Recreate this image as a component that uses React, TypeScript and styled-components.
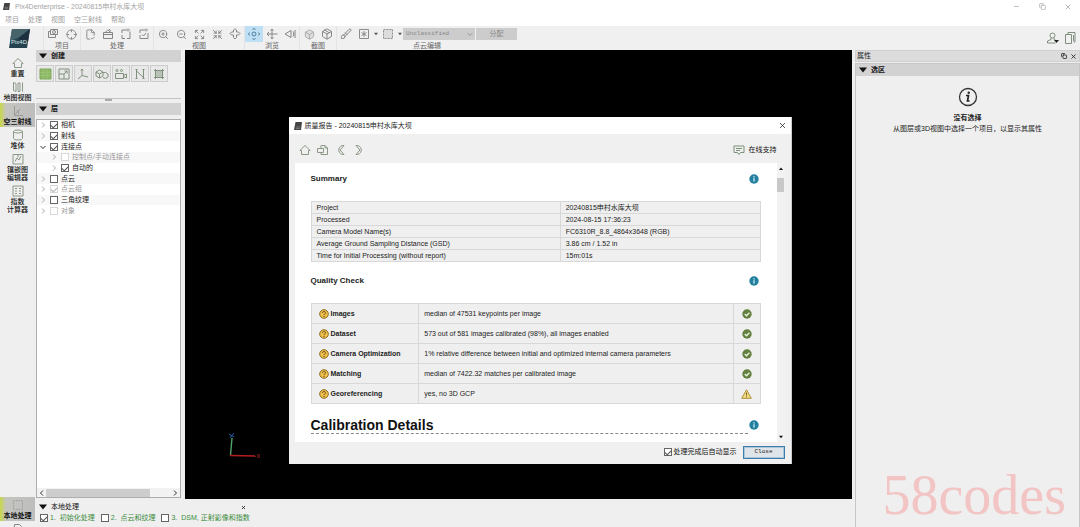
import React from "react";
import styled, { createGlobalStyle, css } from "styled-components";
import {
  ZoomIn, ZoomOut, Crosshair, FileCheck2, Minus, Copy, X,
  Box, Package, Brush, Cylinder, SquareDashed, Expand, Shrink,
} from "lucide-react";

const sans = `"Liberation Sans", "Noto Sans CJK SC", sans-serif`;
const mono = `"Liberation Mono", "Noto Sans CJK SC", monospace`;

const GlobalStyle = createGlobalStyle`
  * { box-sizing: border-box; }
  html, body, #root { height: 100%; }
  body { margin: 0; font: 7px/10px ${sans}; color: #222; background: #efefef; overflow: hidden; }
  button, input, select { font: inherit; color: inherit; margin: 0; padding: 0; border: 0; background: none; border-radius: 0; }
  h1, h2, h3, p, ul { margin: 0; padding: 0; }
  svg { display: block; flex: none; }
`;

const Shell = styled.div`
  height: 100vh;
  display: flex;
  flex-direction: column;
`;

/* Window chrome */
const TitleBar = styled.header`
  display: flex;
  align-items: center;
  gap: 5px;
  height: 13px;
  padding: 0 8px 0 3px;
  background: #fff;
  color: #a4a4a4;
`;
const WindowButtons = styled.div`
  display: flex;
  gap: 18px;
  margin-left: auto;
  button { display: grid; place-items: center; width: 8px; height: 10px; color: #999; }
`;
const MenuBar = styled.nav`
  display: flex;
  gap: 9px;
  height: 13px;
  padding: 1px 5px 0;
  background: #fff;
  color: #a0a0a0;
`;

/* Toolbar */
const Toolbar = styled.div`
  display: flex;
  height: 24px;
  flex: none;
  background: #f0f0f0;
  color: #666;
`;
const Brand = styled.div`
  width: 43px;
  padding: 3px 0 0 9px;
`;
const ToolGroup = styled.div`
  display: flex;
  flex-direction: column;
  align-items: center;
  border-left: 1px solid #e4e4e4;
`;
const ToolRow = styled.div`
  display: flex;
  align-items: center;
  height: 16px;
`;
const ToolButton = styled.button<{ $on?: boolean; $narrow?: boolean }>`
  display: grid;
  place-items: center;
  width: ${(p) => (p.$narrow ? 6 : 18)}px;
  height: 16px;
  color: #858585;
  ${(p) => p.$on && css`background: #bfdff4; color: #4d7f9d;`}
`;
const ToolLabel = styled.span`
  line-height: 8px;
`;
const SelectBox = styled.div`
  display: flex;
  align-items: center;
  width: 72px;
  height: 12px;
  padding-right: 2px;
  background: #ccc;
`;
const ClassSelect = styled.select`
  appearance: none;
  flex: 1;
  height: 12px;
  padding: 0 3px;
  color: #888;
  font: 6px/12px ${mono};
`;
const AssignButton = styled.button`
  width: 41px;
  height: 12px;
  margin-left: 1px;
  background: #ccc;
  color: #888;
`;
const Account = styled.div`
  display: flex;
  gap: 5px;
  align-items: center;
  margin-left: auto;
  padding-right: 4px;
`;

/* Work area */
const Workspace = styled.div`
  display: flex;
  flex: 1;
  min-height: 0;
`;
const SideNav = styled.nav`
  display: flex;
  flex-direction: column;
  flex: none;
  width: 35px;
  padding-top: 5px;
  overflow: hidden;
`;
const NavButton = styled.button<{ $on?: boolean; $tall?: boolean }>`
  display: flex;
  flex-direction: column;
  align-items: center;
  justify-content: center;
  gap: 1px;
  flex: none;
  height: ${(p) => (p.$tall ? 32 : 24)}px;
  font-weight: 500;
  line-height: 8px;
  white-space: pre-line;
  text-align: center;
  color: #111;
  svg { color: #8b9886; }
  ${(p) => p.$on && css`
    background: linear-gradient(90deg, #c8d848 0, #c4c4c0 6px, #bdbdbd 100%);
    font-weight: 700;
    svg { color: #999; }
  `}
`;
const NavFill = styled.div`
  flex: 1;
`;
const Middle = styled.div`
  display: flex;
  flex: 1;
  flex-direction: column;
  min-width: 0;
`;
const MiddleTop = styled.div`
  display: flex;
  flex: 1;
  min-height: 0;
`;
const LeftPanel = styled.section`
  display: flex;
  flex-direction: column;
  flex: none;
  width: 150px;
  padding: 0 4px 1px 1px;
`;
const SectionHead = styled.button<{ $plain?: boolean }>`
  display: flex;
  align-items: center;
  gap: 4px;
  flex: none;
  width: 100%;
  height: 12px;
  padding-left: 3px;
  font-weight: ${(p) => (p.$plain ? 400 : 700)};
  color: #111;
  background: ${(p) => (p.$plain ? "transparent" : "#d2d2d2")};
`;
const CreateRow = styled.div`
  display: flex;
  gap: 1px;
  padding-top: 3px;
  height: 36px;
`;
const CreateButton = styled.button`
  display: grid;
  place-items: center;
  width: 18px;
  height: 17px;
  border: 1px solid #ccc;
  background: #e8e8e8;
  color: #80907c;
`;
const Splitter = styled.div`
  display: flex;
  justify-content: center;
  height: 5px;
  border-top: 1px solid #c4c4c4;
  &::before { content: ""; width: 7px; height: 2px; background: #aaa; }
`;
const TreeBox = styled.div`
  display: flex;
  flex-direction: column;
  flex: 1;
  margin-top: 4px;
  border: 1px solid #adadad;
  background: #fff;
`;
const TreeList = styled.ul`
  display: grid;
  grid-auto-rows: 1fr;
  height: 96px;
  list-style: none;
`;
const TreeRow = styled.li<{ $level: number; $off?: boolean }>`
  display: flex;
  align-items: center;
  gap: 4px;
  padding-left: ${(p) => 3 + p.$level * 11}px;
  color: ${(p) => (p.$off ? "#999" : "#222")};
  &:nth-child(even) { background: #f8f8f8; }
  label { display: flex; align-items: center; gap: 3px; }
`;
const CheckInput = styled.input<{ $faint?: boolean }>`
  appearance: none;
  display: grid;
  place-items: center;
  flex: none;
  width: 8px;
  height: 8px;
  border: 1px solid ${(p) => (p.$faint ? "#d8d8d8" : "#666")};
  background: #fff;
  &:checked::before {
    content: "";
    width: 5px;
    height: 3px;
    border: solid ${(p) => (p.$faint ? "#b4b4b4" : "#555")};
    border-width: 0 0 1px 1px;
    transform: rotate(-45deg);
  }
`;
const HScroll = styled.div`
  display: flex;
  align-items: center;
  height: 9px;
  margin-top: auto;
  padding: 0 2px;
  background: #f2f2f2;
  &::before { order: 1; content: ""; width: 104px; height: 8px; margin: 0 auto 0 1px; background: #cdcdcd; }
  svg:last-child { order: 2; }
`;
const Viewport = styled.main`
  display: flex;
  flex: 1;
  align-items: flex-end;
  padding: 0 0 38px 41px;
  background: #000;
`;
const Process = styled.section`
  flex: none;
  width: 210px;
  height: 28px;
  padding: 2px 0 0 1px;
`;
const ProcessHead = styled.div`
  display: flex;
  align-items: center;
  height: 12px;
  padding-right: 4px;
`;
const ProcessSteps = styled.div`
  display: flex;
  gap: 6px;
  height: 10px;
  padding-left: 4px;
  color: #3c8c3c;
  label { display: flex; align-items: center; gap: 2px; white-space: pre; }
`;
const Properties = styled.aside`
  display: flex;
  flex-direction: column;
  flex: none;
  width: 228px;
  padding-left: 3px;
`;
const PropHead = styled.div`
  display: flex;
  align-items: center;
  gap: 3px;
  height: 12px;
  padding: 0 2px 0 1px;
  background: #dcdcdc;
  border: 1px solid #d0d0d0;
  span { margin-right: auto; }
`;
const PropBody = styled.div`
  display: flex;
  flex: 1;
  flex-direction: column;
  margin-top: 1px;
  border: 1px solid #c6c6c6;
  border-bottom: 0;
`;
const Empty = styled.div`
  display: flex;
  flex-direction: column;
  align-items: center;
  padding-top: 11px;
  strong { margin-top: 5px; line-height: 11px; }
  p { line-height: 11px; }
`;
const Watermark = styled.p`
  margin-top: auto;
  padding: 0 13px 2px;
  text-align: right;
  font: 56px/60px "Liberation Serif", serif;
  color: #f2c4c4;
`;

/* Report window, floating over the workspace */
const Overlay = styled.div`
  position: absolute;
  inset: 0;
  display: flex;
  justify-content: center;
  align-items: flex-start;
  padding-top: 117px;
`;
const Dialog = styled.section`
  width: 503px;
  background: #f0f0f0;
  border-right: 1px solid #ccc;
`;
const DialogTitle = styled.header`
  display: flex;
  align-items: center;
  justify-content: space-between;
  height: 17px;
  padding: 0 4px 0 5px;
  background: #fff;
  span { display: flex; align-items: center; gap: 3px; }
`;
const DialogTools = styled.div`
  display: flex;
  align-items: center;
  gap: 6px;
  height: 29px;
  padding: 2px 14px 0 10px;
  button { color: #8b9886; }
  a { display: flex; align-items: center; gap: 4px; margin-left: auto; color: #111; text-decoration: none; }
`;
const ReportFrame = styled.div`
  display: flex;
  height: 279px;
  margin: 0 6px;
  background: #fff;
`;
const Report = styled.div`
  flex: 1;
  padding: 10px 16px 0;
`;
const ReportHead = styled.div`
  display: flex;
  align-items: center;
  justify-content: space-between;
  height: 12px;
  margin-bottom: 16px;
  padding-right: 2px;
  h2 { font-size: 8px; line-height: 12px; }
`;
const DetailsHead = styled.div`
  display: flex;
  align-items: center;
  gap: 1px;
  height: 18px;
  margin-top: 12px;
  padding-right: 2px;
  h1 { flex: 1; height: 18px; border-bottom: 1px dashed #888; font-size: 14px; line-height: 18px; color: #111; }
`;
const DataTable = styled.table<{ $row: number }>`
  width: 100%;
  table-layout: fixed;
  border-collapse: collapse;
  background: #efefef;
  th, td {
    height: ${(p) => p.$row}px;
    padding: 0 5px;
    border: 1px solid #d8d8d8;
    text-align: left;
    font-weight: 400;
    line-height: 8px;
  }
`;
const SummaryTable = styled(DataTable)`
  margin-bottom: 13px;
`;
const QualityTable = styled(DataTable)`
  th { font-weight: 700; padding-left: 7px; }
  th > span { display: flex; align-items: center; gap: 2px; }
  td:last-child svg { margin: 0 auto; }
  td:last-child { padding: 0; }
`;
const VScroll = styled.div`
  display: flex;
  flex-direction: column;
  align-items: center;
  width: 8px;
  padding: 4px 0 3px;
  background: #f2f2f2;
  &::before { order: 1; content: ""; width: 7px; height: 14px; margin: 7px 0 auto; background: #c8c8c8; }
  svg:last-child { order: 2; }
`;
const DialogFoot = styled.footer`
  display: flex;
  align-items: center;
  justify-content: flex-end;
  gap: 6px;
  height: 22px;
  padding: 0 6px 2px 0;
  label { display: flex; align-items: center; gap: 2px; color: #111; }
`;
const CloseButton = styled.button`
  width: 42px;
  height: 13px;
  border: 1px solid #3d7cab;
  outline: 1px solid #a9c6da;
  outline-offset: -2px;
  background: #dfe4e8;
  font: 6px/8px ${mono};
`;

/* Small drawings */
const Line = ({ d, w = 12, color }: { d: string; w?: number; color?: string }) => (
  <svg width={w} height="12" viewBox={`0 0 ${w} 12`} fill="none" stroke={color ?? "currentColor"}><path d={d} /></svg>
);
const Caret = ({ up, size = 8, color = "#111" }: { up?: boolean; size?: number; color?: string }) => (
  <svg width={size} height={size} viewBox="0 0 8 8"><path d={up ? "M0 6 4 1l4 5z" : "M0 1.500h8L4 6.500z"} fill={color} /></svg>
);
const Chevron = ({ dir, color = "#999" }: { dir: "left" | "right" | "down"; color?: string }) => (
  <svg width="6" height="6" viewBox="0 0 6 6" fill="none" stroke={color}>
    <path d={{ left: "M4 .5 1.500 3 4 5.500", right: "M2 .5 4.500 3 2 5.500", down: "M.5 2 3 4.500 5.500 2" }[dir]} />
  </svg>
);
const Doc = ({ size = 8 }: { size?: number }) => (
  <svg width={size} height={size} viewBox="0 0 8 8"><path d="M1.500 0H8L7 8H0z" fill="#444" /><path d="M2 5h4M2 6.500h4" stroke="#999" strokeWidth=".6" /></svg>
);
const Logo = () => (
  <svg width="21" height="19" viewBox="0 0 21 19" role="img" aria-label="Pix4D">
    <path d="M3 0h18l-3 19H0z" fill="#26424f" />
    <path d="M3 0h18L9 9 1 12z" fill="#48646b" />
    <path d="M21 0 9 10l10 3z" fill="#1c3040" />
    <text x="2" y="15" fontSize="6" fontFamily="Liberation Sans" fill="#dce6e8">Pix4D</text>
  </svg>
);
const Info = () => (
  <svg width="10" height="10" viewBox="0 0 10 10"><circle cx="5" cy="5" r="4.700" fill="#23809f" /><path d="M5 4.200v3.300M5 2.300v1.100" stroke="#d5f0f8" strokeWidth="1.300" /></svg>
);
const Help = () => (
  <svg width="10" height="10" viewBox="0 0 10 10" fill="none"><circle cx="5" cy="5" r="4.300" fill="#f0c04a" stroke="#8a6d24" /><path d="M3.500 4c0-2 3-2 3-.2C6.500 5 5 4.800 5 6.200M5 7v1" stroke="#5c4716" /></svg>
);
const Good = () => (
  <svg width="10" height="10" viewBox="0 0 10 10" fill="none"><circle cx="5" cy="5" r="4.700" fill="#64803f" /><path d="M2.800 5 4.500 6.700 7.400 3.700" stroke="#e9f2df" strokeWidth="1.400" /></svg>
);
const Warn = () => (
  <svg width="11" height="10" viewBox="0 0 11 10" fill="none"><path d="M5.500.8 10.300 9.300H.7z" fill="#f0da84" stroke="#b08f35" /><path d="M5.500 3.500v3M5.500 7.300v1" stroke="#7d671f" /></svg>
);
const Axes = () => (
  <svg width="36" height="30" viewBox="0 0 36 30" fill="none">
    <path d="M4.500 24 6 7" stroke="#4fa56c" strokeWidth="1.400" />
    <path d="M4 24.500 30 25" stroke="#b21e1e" strokeWidth="1.400" />
    <path d="M3 3l5 3M8 2 4 7" stroke="#1f5da8" />
    <path d="M31 23l3 4M34 23l-3 4" stroke="#901818" />
  </svg>
);
const BigInfo = () => (
  <svg width="20" height="20" viewBox="0 0 20 20" fill="none"><circle cx="10" cy="10" r="8.500" stroke="#333" strokeWidth="1.300" /><path d="M8 8.500h2.500L9.500 14h2" stroke="#222" strokeWidth="1.700" /><circle cx="10.700" cy="5.700" r="1.200" fill="#222" /></svg>
);
const Person = () => (
  <svg width="13" height="12" viewBox="0 0 13 12" fill="none" stroke="#7f8f7d"><circle cx="5.500" cy="3.500" r="2.500" /><path d="M4 6v1.500L.5 9v2h8M7 6v1.500l2 1" /><path d="M7 8h5l-2.500 3z" fill="#222" stroke="none" /></svg>
);
const Panels = () => <Line w={11} color="#7f8f7d" d="M.5 2.500h6v9h-6zM3 2V.5h7v9.500H8.500M8.500 3v6" />;
const HomeMark = () => <Line d="M.8 6.500 6 1.500l5.200 5H9.500v4h-7v-4z" />;
const MapMark = () => <Line d="M1.500 1.500 4 2.500v8l-2.500-1zM6 2v8.500h2V2zM10.500 1.500v9" />;
const RayMark = () => <Line d="M2.500 1v9.500H11M2.500 10 8.500 4M5 5l2 4" />;
const MosaicMark = () => <Line d="M1 1.500h10v9.500H1zM3 8.500 5 5l2 2 2-4M6 1.500v3" />;
const CalcMark = () => <Line d="M1 1h10v10H1zM3 3.500h2M7 3.500h2M3 6h2M7 6h2M3 8.500h2M7 8.500h2" />;
const LayersMark = () => <Line d="M3.500 1.500h7v5h-7zM3.500 3.500h-2v6h7v-3M5.500 4a1.500 1.500 0 1 0 3 0 1.500 1.500 0 1 0-3 0" />;
const CaseMark = () => <Line d="M1.500 4.500h9v6h-9zM1.500 6.500h9M4 4.500c0-3 4-3 4 0M7 1l1.500 1.500L7 4" />;
const CropMark = () => <Line d="M2 5V2h6M10 3.500v7H7M5 10.500H2V7M8 .5 9.500 2 8 3.500" />;
const CropCheck = () => <Line d="M2 5V2h6M10 5v5.500H2V7M8 .5 9.500 2 8 3.500M4 6.500l1.500 1.500L8 5" />;
const StarBox = () => <Line color="#8c8c8c" d="M1.500 1.500h9v9h-9zM6 3v6M3.500 4.500l5 3M8.500 4.500l-5 3" />;
const SquareFill = () => (
  <svg width="12" height="12" viewBox="0 0 12 12"><path d="M1.500 1.500h9v9h-9z" fill="#dcdcdc" stroke="#8c8c8c" strokeDasharray="2 1" /></svg>
);
const Orbit = () => <Line d="M4 6a2 2 0 1 0 4 0 2 2 0 1 0-4 0M4.500 1.500 6 .5l1.500 1M4.500 10.500l1.500 1 1.500-1M1.500 4.500.5 6l1 1.500M10.500 4.500l1 1.500-1 1.500" />;
const Fly = () => <Line d="M1 6h10.500M6 1v10M4.500 2.500 6 1l1.500 1.500M4.500 9.500 6 11l1.500-1.500M3 4 1 6l2 2" />;
const ViewCone = () => <Line d="M7 2.500v7L1 6zM9 3.500c1 1.500 1 3.500 0 5M11 2v8" />;
const PlusArrow = () => <Line d="M4.500 4V2L6 .8 7.500 2v2h2L11 5.500 9.500 7h-2v2.500L6 11 4.500 9.500V7h-2L1 5.500 2.500 4z" />;
const ScaleMark = () => <Line d="M1 1h10v10H1zM1 6h5v5M6 6l3-3M6.500 3H9v2.500" />;
const AxisMark = () => <Line d="M5 1v6.500L11 9M5 7.500 1 11M3.800 2.500 5 1l1.200 1.500" />;
const CubesMark = () => (
  <Line w={14} d="M1 4l3.500-2L8 4v4l-3.500 2L1 8zM1 4l3.500 2L8 4M4.500 6v4M8 4.500h2.500L13 6v3l-2.500 1.500L8 9.500" />
);
const CameraMark = () => <Line w={14} d="M1.500 5.500h8v5h-8zM9.500 7.500l3-1.500v4l-3-1.500M2 2.500a1 1 0 1 0 2 0 1 1 0 1 0-2 0M6.500 2.500a1 1 0 1 0 2 0 1 1 0 1 0-2 0" />;
const PolyMark = () => <Line d="M2.500 1.500v9M2.500 3l7 6.500M9.500 1.500v9M1.500 1.500h2M1.500 10.500h2M8.500 1.500h2M8.500 10.500h2" />;
const SurfaceMark = () => (
  <svg width="12" height="12" viewBox="0 0 12 12" fill="none" stroke="currentColor"><path d="M2.500 2.500h7v7h-7z" fill="#b9c2b6" /><path d="M1 2.500h10M1 9.500h10M2.500 1v10M9.500 1v10" /></svg>
);
const GreenGrid = () => (
  <svg width="13" height="12" viewBox="0 0 13 12"><path d="M1 1h11v10H1z" fill="#8fbb66" stroke="#7fa65c" /><path d="M1 4.500h11M1 7.500h11M4.500 1v10M8.500 1v10" stroke="#9dc578" strokeWidth=".6" /></svg>
);
const ExportMark = () => <Line d="M4 4.500v-3h4l2.500 2.500v6.500H4v-2M.5 4.500h6v4h-6zM8 1.500V4h2.500" />;
const Crescent = ({ flip }: { flip?: boolean }) => <Line d={flip ? "M3 1.500c7-.5 7 9.500 0 9L7 6z" : "M9 1.500c-7-.5-7 9.500 0 9L5 6z"} />;
const ChatMark = () => <Line color="#7a917a" d="M1 2h10v6.500H7.500L6 10.500 4.500 8.500H1zM3 4.500h6M3 6.500h4" />;

const icon = { size: 11, strokeWidth: 2 };

type Tool = { name: string; icon: React.ReactNode; on?: boolean };
const groups: { label: string; tools: Tool[] }[] = [
  { label: "项目", tools: [
    { name: "项目属性", icon: <LayersMark /> },
    { name: "坐标", icon: <Crosshair {...icon} /> },
  ] },
  { label: "处理", tools: [
    { name: "质量报告", icon: <FileCheck2 {...icon} /> },
    { name: "处理选项", icon: <CaseMark /> },
    { name: "重新优化", icon: <CropMark /> },
    { name: "重新匹配", icon: <CropCheck /> },
  ] },
  { label: "视图", tools: [
    { name: "放大", icon: <ZoomIn {...icon} /> },
    { name: "缩小", icon: <ZoomOut {...icon} /> },
    { name: "全部显示", icon: <Expand {...icon} /> },
    { name: "聚焦", icon: <Shrink {...icon} /> },
    { name: "顶视图", icon: <PlusArrow /> },
  ] },
  { label: "浏览", tools: [
    { name: "标准", icon: <Orbit />, on: true },
    { name: "轨迹球", icon: <Fly /> },
    { name: "第一人称", icon: <ViewCone /> },
  ] },
  { label: "截图", tools: [
    { name: "裁剪", icon: <Box size={11} strokeWidth={2} color="#aaa" fill="#ddd" /> },
    { name: "裁剪框", icon: <Package size={12} strokeWidth={2} /> },
  ] },
];

const navItems = [
  { label: "重置", icon: <HomeMark /> },
  { label: "地图视图", icon: <MapMark /> },
  { label: "空三射线", icon: <RayMark />, on: true },
  { label: "堆体", icon: <Cylinder size={12} strokeWidth={2} /> },
  { label: "镶嵌图\n编辑器", icon: <MosaicMark />, tall: true },
  { label: "指数\n计算器", icon: <CalcMark />, tall: true },
];

const tree = [
  { label: "相机", level: 0, checked: true },
  { label: "射线", level: 0, checked: true },
  { label: "连接点", level: 0, checked: true, open: true },
  { label: "控制点/手动连接点", level: 1, off: true },
  { label: "自动的", level: 1, checked: true },
  { label: "点云", level: 0 },
  { label: "点云组", level: 0, off: true, checked: true },
  { label: "三角纹理", level: 0 },
  { label: "对象", level: 0, off: true },
];

const createTools = [
  { name: "正射影像", icon: <GreenGrid /> },
  { name: "缩放", icon: <ScaleMark /> },
  { name: "坐标轴", icon: <AxisMark /> },
  { name: "对象", icon: <CubesMark /> },
  { name: "动画", icon: <CameraMark /> },
  { name: "折线", icon: <PolyMark /> },
  { name: "表面", icon: <SurfaceMark /> },
];

const summary = [
  ["Project", "20240815申村水库大坝"],
  ["Processed", "2024-08-15 17:36:23"],
  ["Camera Model Name(s)", "FC6310R_8.8_4864x3648 (RGB)"],
  ["Average Ground Sampling Distance (GSD)", "3.86 cm / 1.52 in"],
  ["Time for Initial Processing (without report)", "15m:01s"],
];

const quality = [
  { name: "Images", text: "median of 47531 keypoints per image", ok: true },
  { name: "Dataset", text: "573 out of 581 images calibrated (98%), all images enabled", ok: true },
  { name: "Camera Optimization", text: "1% relative difference between initial and optimized internal camera parameters", ok: true },
  { name: "Matching", text: "median of 7422.32 matches per calibrated image", ok: true },
  { name: "Georeferencing", text: "yes, no 3D GCP", ok: false },
];

const steps = [
  { label: "1.  初始化处理", checked: true },
  { label: "2.  点云和纹理" },
  { label: "3.  DSM, 正射影像和指数" },
];

const ReportDialog = () => (
  <Overlay>
    <Dialog role="dialog" aria-label="质量报告">
      <DialogTitle>
        <span><Doc />质量报告 - 20240815申村水库大坝</span>
        <button aria-label="关闭"><X size={9} strokeWidth={2} /></button>
      </DialogTitle>
      <DialogTools>
        <button aria-label="主页"><HomeMark /></button>
        <button aria-label="导出"><ExportMark /></button>
        <button aria-label="后退"><Crescent /></button>
        <button aria-label="前进"><Crescent flip /></button>
        <a href="#support"><ChatMark />在线支持</a>
      </DialogTools>
      <ReportFrame>
        <Report>
          <ReportHead><h2>Summary</h2><Info /></ReportHead>
          <SummaryTable $row={12}>
            <colgroup><col style={{ width: "55.5%" }} /><col /></colgroup>
            <tbody>
              {summary.map(([k, v]) => <tr key={k}><th scope="row">{k}</th><td>{v}</td></tr>)}
            </tbody>
          </SummaryTable>
          <ReportHead><h2>Quality Check</h2><Info /></ReportHead>
          <QualityTable $row={20}>
            <colgroup><col style={{ width: "24%" }} /><col /><col style={{ width: "6%" }} /></colgroup>
            <tbody>
              {quality.map((q) => (
                <tr key={q.name}>
                  <th scope="row"><span><Help />{q.name}</span></th>
                  <td>{q.text}</td>
                  <td>{q.ok ? <Good /> : <Warn />}</td>
                </tr>
              ))}
            </tbody>
          </QualityTable>
          <DetailsHead><h1>Calibration Details</h1><Info /></DetailsHead>
        </Report>
        <VScroll><Caret up size={4} /><Caret size={4} /></VScroll>
      </ReportFrame>
      <DialogFoot>
        <label><CheckInput type="checkbox" defaultChecked />处理完成后自动显示</label>
        <CloseButton>Close</CloseButton>
      </DialogFoot>
    </Dialog>
  </Overlay>
);

export default function App() {
  return (
    <Shell>
      <GlobalStyle />
      <TitleBar>
        <Doc size={7} />
        <span>Pix4Denterprise - 20240815申村水库大坝</span>
        <WindowButtons>
          <button aria-label="最小化"><Minus size={7} /></button>
          <button aria-label="还原"><Copy size={7} /></button>
          <button aria-label="关闭"><X size={8} /></button>
        </WindowButtons>
      </TitleBar>
      <MenuBar>
        {["项目", "处理", "视图", "空三射线", "帮助"].map((m) => <button key={m}>{m}</button>)}
      </MenuBar>
      <Toolbar>
        <Brand><Logo /></Brand>
        {groups.map((g) => (
          <ToolGroup key={g.label}>
            <ToolRow>
              {g.tools.map((t) => <ToolButton key={t.name} aria-label={t.name} $on={t.on}>{t.icon}</ToolButton>)}
            </ToolRow>
            <ToolLabel>{g.label}</ToolLabel>
          </ToolGroup>
        ))}
        <ToolGroup>
          <ToolRow>
            <ToolButton aria-label="编辑点云"><Brush size={12} strokeWidth={2} /></ToolButton>
            <ToolButton aria-label="添加"><StarBox /></ToolButton>
            <ToolButton aria-label="添加选项" $narrow><Caret size={4} color="#555" /></ToolButton>
            <ToolButton aria-label="选择"><SquareFill /></ToolButton>
            <ToolButton aria-label="选择选项" $narrow><Caret size={4} color="#555" /></ToolButton>
            <SelectBox>
              <ClassSelect aria-label="点类别"><option>Unclassified</option></ClassSelect>
              <Chevron dir="down" />
            </SelectBox>
            <AssignButton>分配</AssignButton>
          </ToolRow>
          <ToolLabel>点云编辑</ToolLabel>
        </ToolGroup>
        <Account><Person /><Panels /></Account>
      </Toolbar>
      <Workspace>
        <SideNav>
          {navItems.map((n) => <NavButton key={n.label} $on={n.on} $tall={n.tall}>{n.icon}{n.label}</NavButton>)}
          <NavFill />
          <NavButton $on><SquareDashed size={12} strokeWidth={2} />本地处理</NavButton>
          <svg width="35" height="6" viewBox="0 0 35 6" fill="none" stroke="#888"><path d="M14.500 6V3.500h5l2 2V6" /></svg>
        </SideNav>
        <Middle>
          <MiddleTop>
            <LeftPanel>
              <SectionHead><Caret />创建</SectionHead>
              <CreateRow>
                {createTools.map((t) => <CreateButton key={t.name} aria-label={t.name}>{t.icon}</CreateButton>)}
              </CreateRow>
              <Splitter />
              <SectionHead><Caret />层</SectionHead>
              <TreeBox>
                <TreeList>
                  {tree.map((t) => (
                    <TreeRow key={t.label} $level={t.level} $off={t.off}>
                      <Chevron dir={t.open ? "down" : "right"} color={t.open ? "#333" : "#aaa"} />
                      <label><CheckInput type="checkbox" defaultChecked={t.checked} $faint={t.off} />{t.label}</label>
                    </TreeRow>
                  ))}
                </TreeList>
                <HScroll><Chevron dir="left" color="#333" /><Chevron dir="right" color="#333" /></HScroll>
              </TreeBox>
            </LeftPanel>
            <Viewport><Axes /></Viewport>
          </MiddleTop>
          <Process>
            <ProcessHead>
              <SectionHead $plain><Caret />本地处理</SectionHead>
              <button aria-label="关闭"><X size={5} strokeWidth={4} /></button>
            </ProcessHead>
            <ProcessSteps>
              {steps.map((s) => <label key={s.label}><CheckInput type="checkbox" defaultChecked={s.checked} />{s.label}</label>)}
            </ProcessSteps>
          </Process>
        </Middle>
        <Properties>
          <PropHead>
            <span>属性</span>
            <button aria-label="浮动"><Copy size={6} strokeWidth={3} /></button>
            <button aria-label="关闭"><X size={7} strokeWidth={3} /></button>
          </PropHead>
          <PropBody>
            <SectionHead><Caret />选区</SectionHead>
            <Empty>
              <BigInfo />
              <strong>没有选择</strong>
              <p>从图层或3D视图中选择一个项目，以显示其属性</p>
            </Empty>
            <Watermark>58codes</Watermark>
          </PropBody>
        </Properties>
      </Workspace>
      <ReportDialog />
    </Shell>
  );
}
